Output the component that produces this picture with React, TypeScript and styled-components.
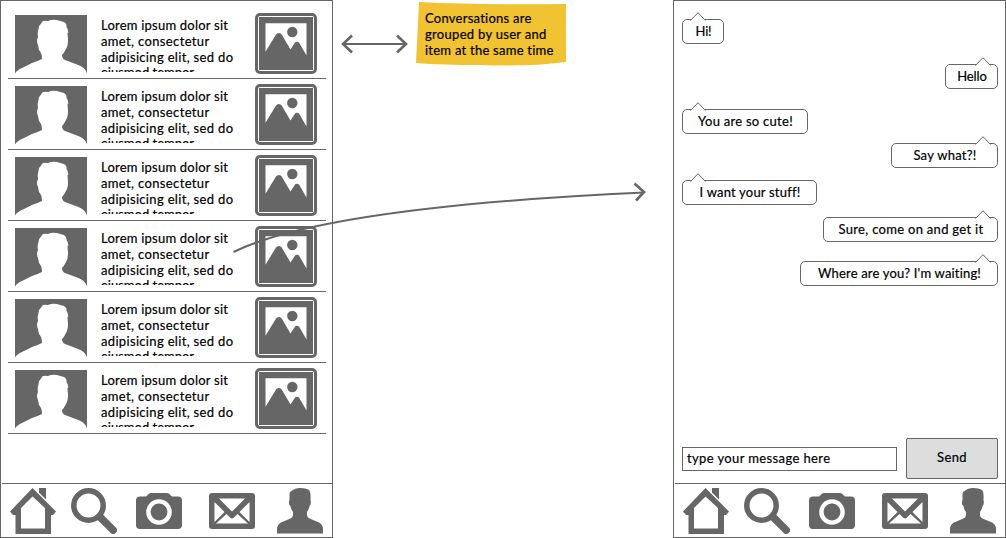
import React from "react";
import styled, { createGlobalStyle } from "styled-components";

const INK = "#666666";

const GlobalStyle = createGlobalStyle`
  *, *::before, *::after { box-sizing: border-box; }
  body {
    margin: 0;
    background: #fff;
    color: #000;
    font: 13px/16px Lato, sans-serif;
    -webkit-text-stroke: 0.2px #000;
    overflow: hidden;
  }
  svg { display: block; }
`;

const Board = styled.main`
  position: relative;
  display: flex;
  justify-content: space-between;
  width: 1006px;
  height: 538px;
`;

const Phone = styled.section`
  display: flex;
  flex-direction: column;
  width: 333px;
  height: 538px;
  border: 1px solid ${INK};
`;

const List = styled.ul`
  flex: 1;
  list-style: none;
  margin: 0;
  padding: 7px 6px 0 7px;
`;

const Item = styled.li`
  display: flex;
  align-items: flex-start;
  height: 71px;
  padding: 5px 9px 0 7px;
  border-bottom: 1px solid ${INK};
`;

const AvatarSlot = styled.div`
  width: 72px;
  padding-top: 2px;
`;

const Excerpt = styled.div`
  flex: 1;
  height: 59px;
  margin-left: 14px;
  padding-top: 4px;
  overflow: hidden;
`;

const Line = styled.div<{ $spacing?: number }>`
  white-space: nowrap;
  letter-spacing: ${(p) => p.$spacing ?? 0}px;
`;

const LastLine = styled(Line)`
  margin-top: -1px;
`;

const TabBar = styled.nav`
  display: flex;
  align-items: center;
  height: 54px;
  margin-left: 1px;
  padding: 0 8px;
  border-top: 1px solid ${INK};
`;

const Tab = styled.div<{ $gap: number }>`
  width: 46px;
  height: 46px;
  margin-left: ${(p) => p.$gap}px;
`;

const Middle = styled.aside`
  flex: 1;
  display: flex;
  align-items: flex-start;
  padding: 2px 0 0 8px;
`;

const DoubleArrow = styled.svg`
  margin-top: 32px;
`;

const Note = styled.div`
  position: relative;
  width: 151px;
  height: 66px;
  margin-left: 8px;
  padding: 8px 0 0 9px;
`;

const NotePaper = styled.svg`
  position: absolute;
  inset: 0;
  z-index: -1;
`;

const FlowArrow = styled.svg`
  position: absolute;
  left: 225px;
  top: 175px;
`;

const Thread = styled.div`
  flex: 1;
  display: flex;
  flex-direction: column;
  align-items: flex-start;
  padding: 18px 7px 0 8px;
`;

const Bubble = styled.div<{ $width: number; $gap: number; $mine?: boolean }>`
  position: relative;
  align-self: ${(p) => (p.$mine ? "flex-end" : "flex-start")};
  display: flex;
  justify-content: center;
  width: ${(p) => p.$width}px;
  height: 25px;
  margin-top: ${(p) => p.$gap}px;
  padding: 3px 0 0 1px;
  border: 1px solid ${INK};
  border-radius: 5px;
`;

const Pointer = styled.svg<{ $mine?: boolean }>`
  position: absolute;
  top: -8px;
  ${(p) => (p.$mine ? "right: 6px" : "left: 7px")};
`;

const Composer = styled.div`
  display: flex;
  align-items: flex-start;
  justify-content: space-between;
  height: 45px;
  padding: 0 7px 0 8px;
`;

const Field = styled.div`
  width: 215px;
  height: 24px;
  margin-top: 9px;
  padding: 2px 4px;
  border: 1px solid ${INK};
`;

const SendButton = styled.div`
  display: flex;
  justify-content: center;
  width: 92px;
  height: 41px;
  padding-top: 10px;
  border: 1px solid ${INK};
  border-radius: 2px;
  background: #ddd;
`;

const Avatar = () => (
  <svg width="72" height="59" viewBox="0 0 72 59">
    <path fill={INK} d="M0 0H72V58.5C71 54 67 51.5 62 49.5L50 45Q47 43.5 47 40Q49 38 51 34Q53 31 53 25L52.500 18Q54 18 53 16Q53 14 51.500 12Q52 9 49 7Q45 6 42 5Q37 4 33 6Q27 5 26.500 8Q24 10 23.500 14Q22 18 23 22Q21 26 23 30L24 35Q27 38 27 44Q23 46 17 48L7 53Q2 55 0 58.500Z" />
  </svg>
);

const Picture = () => (
  <svg width="62" height="61" viewBox="0 0 62 61">
    <rect x="1.500" y="1.500" width="59" height="58" rx="3.500" fill="#fff" stroke={INK} strokeWidth="3" />
    <rect x="4" y="4" width="54" height="53" fill={INK} />
    <path fill="#fff" d="M10.500 10.300H51.500V42.500L44.300 30Q43.500 28.800 42 28.800Q40.300 28.800 39.700 30L35.500 36.500L26.700 21.500Q25.800 20 24 20Q21.800 20 21 21.500L10.500 38.700Z" />
    <circle cx="37.300" cy="19" r="5.200" fill={INK} />
  </svg>
);

const HomeIcon = () => (
  <svg width="46" height="46" viewBox="0 0 46 46">
    <path fill={INK} fillRule="evenodd" d="M22.500 0L46 23.500L43 27H41V46H5.500V27H3L0 23.500ZM22.500 8.500L11 20V40.500H35V20Z" />
    <path fill={INK} d="M29 0H36V11.500L29 4.500Z" />
  </svg>
);

const SearchIcon = () => (
  <svg width="46" height="46" viewBox="0 0 46 46" fill="none" stroke={INK}>
    <circle cx="17.500" cy="17.500" r="14.700" strokeWidth="5.500" />
    <path d="M29 29L42.200 42.200" strokeWidth="7.500" strokeLinecap="round" />
  </svg>
);

const CameraIcon = () => (
  <svg width="46" height="46" viewBox="0 0 46 46">
    <path fill={INK} d="M4 8.500H9.500Q11 8.500 12 6.500Q13 5 15 5H31Q33 5 34 6.500Q35 8.500 36.500 8.500H42Q46 8.500 46 12.500V37Q46 41 42 41H4Q0 41 0 37V12.500Q0 8.500 4 8.500Z" />
    <circle cx="23" cy="24" r="10.600" fill={INK} stroke="#fff" strokeWidth="4.400" />
  </svg>
);

const MailIcon = () => (
  <svg width="46" height="46" viewBox="0 0 46 46">
    <rect y="5" width="46" height="36" rx="3" fill={INK} />
    <path fill="#fff" d="M10 10.500H36L23 23.500ZM5.500 14L15.500 24L5.500 34ZM40.500 14L30.500 24L40.500 34ZM7 35.500L17.500 26L21 29.500Q23 31.500 25 29.500L28.500 26L39 35.500Z" />
  </svg>
);

const UserIcon = () => (
  <svg width="46" height="46" viewBox="0 0 46 46">
    <path fill={INK} d="M0 45.500V41Q0 36.500 4 34.500L13.500 30.500Q16 29.500 16 27V24Q14 21.500 13.500 18Q11.500 17 12 13.500L12.500 12V6Q12.500 3.500 14.500 3Q18 0 23 0Q29 0 32 2Q34 4 33.500 12Q34.500 16 32.500 18Q32 21.500 30 24V27Q30 29.500 32.500 30.500L42 34.500Q46 36.500 46 41V45.500Z" />
  </svg>
);

const tabs = [
  { gap: 0, Icon: HomeIcon },
  { gap: 15, Icon: SearchIcon },
  { gap: 19, Icon: CameraIcon },
  { gap: 27, Icon: MailIcon },
  { gap: 22, Icon: UserIcon },
];

const Tabs = () => (
  <TabBar>
    {tabs.map(({ gap, Icon }, i) => (
      <Tab key={i} $gap={gap}>
        <Icon />
      </Tab>
    ))}
  </TabBar>
);

const messages = [
  { text: "Hi!", width: 42, gap: 0, mine: false, spacing: -0.2 },
  { text: "Hello", width: 53, gap: 20, mine: true, spacing: -0.1 },
  { text: "You are so cute!", width: 126, gap: 20, mine: false, spacing: 0.27 },
  { text: "Say what?!", width: 107, gap: 9, mine: true, spacing: 0.27 },
  { text: "I want your stuff!", width: 135, gap: 12, mine: false, spacing: 0.2 },
  { text: "Sure, come on and get it", width: 175, gap: 12, mine: true, spacing: 0.3 },
  { text: "Where are you? I'm waiting!", width: 198, gap: 19, mine: true, spacing: 0.18 },
];

export default function App() {
  return (
    <>
      <GlobalStyle />
      <Board>
        <Phone>
          <List>
            {Array.from({ length: 6 }, (_, i) => (
              <Item key={i}>
                <AvatarSlot>
                  <Avatar />
                </AvatarSlot>
                <Excerpt>
                  <Line $spacing={0.22}>Lorem ipsum dolor sit</Line>
                  <Line $spacing={0.36}>amet, consectetur</Line>
                  <Line $spacing={0.33}>adipisicing elit, sed do</Line>
                  <LastLine $spacing={0}>eiusmod tempor</LastLine>
                </Excerpt>
                <Picture />
              </Item>
            ))}
          </List>
          <Tabs />
        </Phone>
        <Middle>
          <DoubleArrow width="67" height="20" viewBox="0 0 67 20" fill="none" stroke={INK} strokeWidth="2">
            <path d="M2 10H65" />
            <path strokeWidth="2.600" d="M11 1.500L2 10L11 18.500M56 1.500L65 10L56 18.500" />
          </DoubleArrow>
          <Note>
            <NotePaper width="151" height="66" viewBox="0 0 151 66">
              <path fill="#f1c232" d="M3 0Q60 3 150 2V60Q110 65 65 63Q25 63 0 61Z" />
            </NotePaper>
            <Line $spacing={0.25}>Conversations are</Line>
            <Line $spacing={0.3}>grouped by user and</Line>
            <Line $spacing={0.25}>item at the same time</Line>
          </Note>
        </Middle>
        <Phone>
          <Thread>
            {messages.map((m) => (
              <Bubble key={m.text} $width={m.width} $gap={m.gap} $mine={m.mine}>
                <Pointer $mine={m.mine} width="16" height="9" viewBox="0 0 16 9">
                  <path d="M0.500 8.500L8 0.700L15.500 8.500" fill="#fff" stroke={INK} />
                </Pointer>
                <Line $spacing={m.spacing}>{m.text}</Line>
              </Bubble>
            ))}
          </Thread>
          <Composer>
            <Field>
              <Line $spacing={0.38}>type your message here</Line>
            </Field>
            <SendButton>
              <Line $spacing={0.4}>Send</Line>
            </SendButton>
          </Composer>
          <Tabs />
        </Phone>
        <FlowArrow width="425" height="80" viewBox="225 175 425 80" fill="none" stroke={INK} strokeWidth="2">
          <path d="M233.500 252Q326 207 644 192.500" />
          <path strokeWidth="2.600" d="M634.500 183.500L644 192L636 200.500" />
        </FlowArrow>
      </Board>
    </>
  );
}
